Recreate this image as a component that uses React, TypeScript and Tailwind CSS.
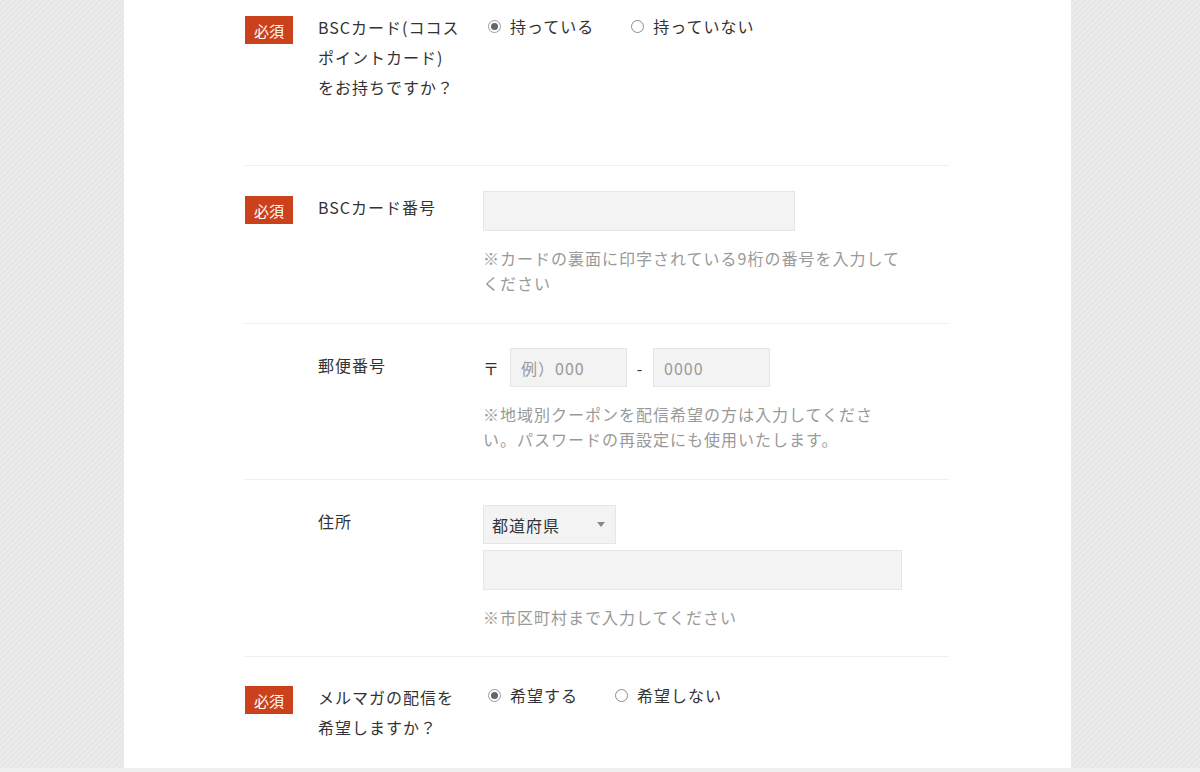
import React from 'react';

const font = { fontFamily: '"Noto Sans CJK JP", "Noto Sans", sans-serif' };

function Badge() {
    return (
        <span className="mt-[5px] inline-flex h-[28px] w-[48px] items-center justify-center bg-[#cb411c] text-[15px] leading-none text-white">
            必須
        </span>
    );
}

function Radio({ checked, label }: { checked?: boolean; label: string }) {
    return (
        <label className="flex items-center gap-[9px] text-[16px] leading-[30px] tracking-[1px] text-[#333]">
            <span
                className={`flex h-[13px] w-[13px] items-center justify-center rounded-full border bg-white ${
                    checked ? 'border-[#9a9a9a] bg-[#e0e0e0]' : 'border-[#8c8c8c]'
                }`}
            >
                {checked && <span className="h-[7px] w-[7px] rounded-full bg-[#666]" />}
            </span>
            <span>{label}</span>
        </label>
    );
}

function Row({
    required,
    label,
    height,
    top = 'pt-[25px]',
    last,
    children,
}: {
    required?: boolean;
    label: React.ReactNode;
    height: string;
    top?: string;
    last?: boolean;
    children: React.ReactNode;
}) {
    return (
        <div className={`flex ${height} ${top} ${last ? '' : 'border-b border-[#efefef]'}`}>
            <div className="w-[74px] shrink-0 pl-[1px]">{required && <Badge />}</div>
            <div className="mt-[1px] w-[165px] shrink-0 whitespace-nowrap text-[16px] leading-[30px] tracking-[1px] text-[#333]">
                {label}
            </div>
            <div className="flex-1">{children}</div>
        </div>
    );
}

const help = 'mt-[15px] whitespace-nowrap text-[16px] leading-[25px] tracking-[1px] text-[#999]';

export default function App() {
    return (
        <div
            style={font}
            className="h-[772px] w-full overflow-hidden bg-[repeating-linear-gradient(135deg,#ebebeb_0px,#ebebeb_2px,#e6e6e6_2px,#e6e6e6_4px)]"
        >
            <div className="ml-[124px] h-[768px] w-[947px] bg-white pl-[120px]">
                <div className="w-[705px]">
                    {/* カード有無 */}
                    <Row
                        required
                        height="h-[166px]"
                        top="pt-[11px]"
                        label={
                            <>
                                BSCカード(ココス
                                <br />
                                ポイントカード)
                                <br />
                                をお持ちですか？
                            </>
                        }
                    >
                        <div className="flex items-center gap-[37px] pl-[5px]">
                            <Radio checked label="持っている" />
                            <Radio label="持っていない" />
                        </div>
                    </Row>

                    {/* カード番号 */}
                    <Row required height="h-[158px]" label="BSCカード番号">
                        <div className="h-[40px] w-[312px] border border-[#e6e6e6] bg-[#f3f3f3]" />
                        <p className={help}>
                            ※カードの裏面に印字されている9桁の番号を入力して
                            <br />
                            ください
                        </p>
                    </Row>

                    {/* 郵便番号 */}
                    <Row height="h-[156px]" label="郵便番号">
                        <div className="-mt-[1px] flex items-center text-[16px] tracking-[1px] text-[#333]">
                            <span className="w-[27px]">〒</span>
                            <div className="flex h-[39px] w-[117px] items-center border border-[#e6e6e6] bg-[#f3f3f3] pl-[10px] text-[#999]">
                                例）000
                            </div>
                            <span className="w-[26px] text-center">-</span>
                            <div className="flex h-[39px] w-[117px] items-center border border-[#e6e6e6] bg-[#f3f3f3] pl-[10px] text-[#999]">
                                0000
                            </div>
                        </div>
                        <p className={help}>
                            ※地域別クーポンを配信希望の方は入力してくださ
                            <br />
                            い。パスワードの再設定にも使用いたします。
                        </p>
                    </Row>

                    {/* 住所 */}
                    <Row height="h-[177px]" label="住所">
                        <div className="flex h-[39px] w-[133px] items-center justify-between border border-[#e6e6e6] bg-[#f3f3f3] pl-[8px] pr-[10px] text-[16px] tracking-[1px] text-[#333]">
                            <span>都道府県</span>
                            <span className="h-0 w-0 border-x-[4px] border-t-[5px] border-x-transparent border-t-[#888]" />
                        </div>
                        <div className="mt-[6px] h-[40px] w-[419px] border border-[#e6e6e6] bg-[#f3f3f3]" />
                        <p className={help}>※市区町村まで入力してください</p>
                    </Row>

                    {/* メルマガ */}
                    <Row
                        required
                        last
                        height="h-[111px]"
                        top="pt-[24px]"
                        label={
                            <>
                                メルマガの配信を
                                <br />
                                希望しますか？
                            </>
                        }
                    >
                        <div className="-mt-[1px] flex items-center gap-[37px] pl-[5px]">
                            <Radio checked label="希望する" />
                            <Radio label="希望しない" />
                        </div>
                    </Row>
                </div>
            </div>
            <div className="h-[4px] w-full bg-[#efefef]" />
        </div>
    );
}
